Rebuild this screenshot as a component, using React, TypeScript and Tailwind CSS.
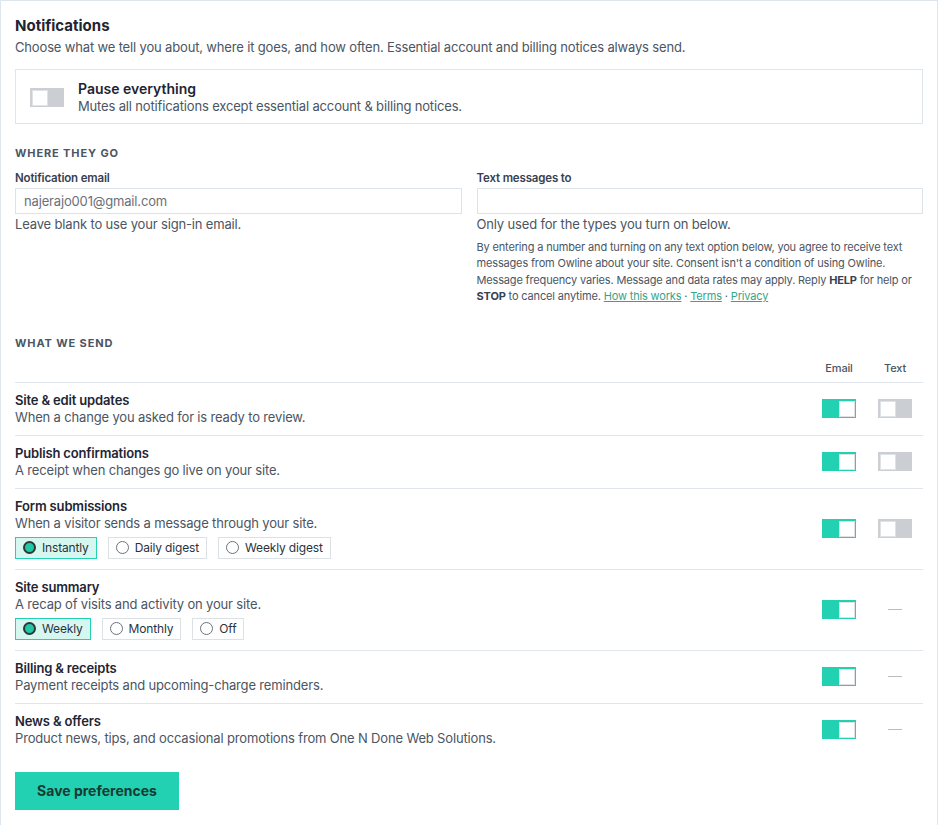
import React, { useState } from "react";

type Row = {
  title: string;
  desc: string;
  email: boolean;
  text: boolean | null;
  choices?: string[];
};

const rows: Row[] = [
  { title: "Site & edit updates", desc: "When a change you asked for is ready to review.", email: true, text: false },
  { title: "Publish confirmations", desc: "A receipt when changes go live on your site.", email: true, text: false },
  {
    title: "Form submissions",
    desc: "When a visitor sends a message through your site.",
    email: true,
    text: false,
    choices: ["Instantly", "Daily digest", "Weekly digest"],
  },
  {
    title: "Site summary",
    desc: "A recap of visits and activity on your site.",
    email: true,
    text: null,
    choices: ["Weekly", "Monthly", "Off"],
  },
  { title: "Billing & receipts", desc: "Payment receipts and upcoming-charge reminders.", email: true, text: null },
  { title: "News & offers", desc: "Product news, tips, and occasional promotions from One N Done Web Solutions.", email: true, text: null },
];

const Toggle = ({ on }: { on: boolean }) => (
  <span
    className={`inline-flex h-[19px] w-[34px] items-center ${
      on ? "justify-end bg-[#22d1b2] pr-[1px]" : "justify-start bg-[#cbcfd3] pl-[2px]"
    }`}
  >
    <span className="h-[16px] w-[16px] border border-[#dde3e6] bg-white" />
  </span>
);

const Choice = ({ label, checked, onPick }: { label: string; checked: boolean; onPick: () => void }) => (
  <button
    onClick={onPick}
    className={`flex h-[22px] items-center gap-[6px] border px-[7px] text-[12px] text-[#2b3340] ${
      checked ? "border-[#22d1b2] bg-[#d6f7ef]" : "border-[#dce1e6] bg-white"
    }`}
  >
    <span
      className={`h-[13px] w-[13px] rounded-full ${
        checked ? "border-2 border-[#2b3836] bg-[#22c7a6]" : "border border-[#6b7280] bg-white"
      }`}
    />
    {label}
  </button>
);

const PrefRow = ({ row, last }: { row: Row; last: boolean }) => {
  const [picked, setPicked] = useState(0);
  return (
    <div className={`flex items-center ${last ? "" : "border-b border-[#e1e6ec]"}`}>
      <div className="flex-1 py-[9px]">
        <div className="text-[13px] font-semibold leading-[17px] text-[#1e2533]">{row.title}</div>
        <div className="text-[13px] leading-[17px] text-[#4b5563]">{row.desc}</div>
        {row.choices && (
          <div className="mt-[5px] mb-[1px] flex gap-[11px]">
            {row.choices.map((c, i) => (
              <Choice key={c} label={c} checked={picked === i} onPick={() => setPicked(i)} />
            ))}
          </div>
        )}
      </div>
      <div className="flex w-14 justify-center">
        <Toggle on={row.email} />
      </div>
      <div className="flex w-14 justify-center">
        {row.text === null ? (
          <span className="block h-[1.5px] w-[14px] bg-[#b9bdc1]" />
        ) : (
          <Toggle on={row.text} />
        )}
      </div>
    </div>
  );
};

export default function App() {
  return (
    <div className="min-h-[825px] bg-white font-['Inter','Noto_Sans',sans-serif] tracking-[-0.01em] text-[#1e2533]">
      <div className="border border-[#dfe5ec] px-[14px] pt-[15px] pb-[15px]">
        <h1 className="text-[15px] font-bold leading-5 tracking-normal text-[#1f2430]">Notifications</h1>
        <p className="mt-[2px] text-[13px] leading-[18px] text-[#4b5563]">
          Choose what we tell you about, where it goes, and how often. Essential account and billing notices always send.
        </p>

        {/* master switch */}
        <div className="mt-[13px] flex items-center gap-[14px] border border-[#dfe5ec] px-[14px] pt-[10px] pb-[8px]">
          <Toggle on={false} />
          <div>
            <div className="text-[14px] font-semibold leading-[18px] tracking-normal text-[#1e2533]">Pause everything</div>
            <div className="text-[13px] leading-[17px] text-[#4b5563]">
              Mutes all notifications except essential account &amp; billing notices.
            </div>
          </div>
        </div>

        <h2 className="mt-[21px] text-[11px] font-bold leading-4 tracking-[0.08em] text-[#4b5563]">WHERE THEY GO</h2>

        <div className="mt-[9px] grid grid-cols-2 gap-x-[15px]">
          <div>
            <label className="block text-[11.5px] font-semibold leading-4 text-[#374151]">Notification email</label>
            <input
              defaultValue="najerajo001@gmail.com"
              className="mt-[2px] h-[26px] w-full border border-[#dde3ea] px-2 text-[13px] text-[#6b7078] outline-none"
            />
            <p className="mt-[1px] text-[13px] leading-[18px] text-[#4b5563]">Leave blank to use your sign-in email.</p>
          </div>
          <div>
            <label className="block text-[11.5px] font-semibold leading-4 text-[#374151]">Text messages to</label>
            <input className="mt-[2px] h-[26px] w-full border border-[#dde3ea] px-2 text-[13px] outline-none" />
            <p className="mt-[1px] text-[13px] leading-[18px] text-[#4b5563]">Only used for the types you turn on below.</p>
            <p className="mt-[6px] text-[11px] leading-[16.4px] text-[#4b5563]">
              By entering a number and turning on any text option below, you agree to receive text messages from Owline
              about your site. Consent isn't a condition of using Owline. Message frequency varies. Message and data rates
              may apply. Reply <b className="text-[#374151]">HELP</b> for help or <b className="text-[#374151]">STOP</b>{" "}
              to cancel anytime.{" "}
              <a href="#" className="text-[#34a58b] underline">How this works</a> ·{" "}
              <a href="#" className="text-[#34a58b] underline">Terms</a> ·{" "}
              <a href="#" className="text-[#34a58b] underline">Privacy</a>
            </p>
          </div>
        </div>

        <h2 className="mt-[30px] text-[11px] font-bold leading-4 tracking-[0.08em] text-[#4b5563]">WHAT WE SEND</h2>

        <div className="mt-[9px] flex border-b border-[#e1e6ec] pb-[6px] text-[11px] font-medium leading-4 text-[#4b5563]">
          <div className="flex-1" />
          <div className="w-14 text-center">Email</div>
          <div className="w-14 text-center">Text</div>
        </div>

        {rows.map((r, i) => (
          <PrefRow key={r.title} row={r} last={i === rows.length - 1} />
        ))}

        <button className="mt-[16px] h-[38px] w-[164px] bg-[#22d1b2] text-[14px] font-bold tracking-normal text-[#173a33]">
          Save preferences
        </button>
      </div>
    </div>
  );
}
